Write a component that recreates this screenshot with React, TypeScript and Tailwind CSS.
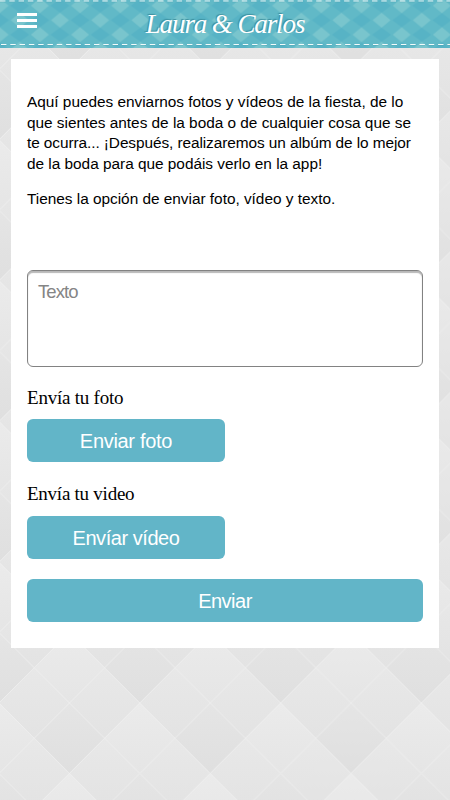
export default function App() {
  return (
    <div className="relative flex h-[800px] w-[450px] flex-col overflow-hidden bg-[#e5e5e5] font-['Liberation_Sans',Arial,sans-serif] text-black">
      <svg className="absolute inset-0" width="450" height="800" aria-hidden="true">
        <defs>
          <linearGradient id="shade" x1="0" y1="0" x2="0" y2="1">
            <stop offset="0" stopColor="#e5e5e5" />
            <stop offset="1" stopColor="#dfdfdf" />
          </linearGradient>
          <linearGradient id="light" x1="0" y1="0" x2="0" y2="1">
            <stop offset="0" stopColor="#ebebeb" />
            <stop offset="1" stopColor="#e5e5e5" />
          </linearGradient>
          <linearGradient id="mid" x1="0" y1="0" x2="0" y2="1">
            <stop offset="0" stopColor="#e8e8e8" />
            <stop offset="1" stopColor="#e3e3e3" />
          </linearGradient>
          <pattern id="paper" width="140.8" height="140.8" patternUnits="userSpaceOnUse" patternTransform="translate(-1 703)">
            <rect width="140.8" height="140.8" fill="#e6e6e6" />
            {[[35.2, 0], [105.6, 0], [35.2, 70.4], [105.6, 70.4], [35.2, 140.8], [105.6, 140.8]].map(([x, y]) => (
              <path key={`${x}-${y}`} d={`M${x} ${y - 35.2}l35.2 35.2l-35.2 35.2l-35.2 -35.2z`} fill="url(#mid)" />
            ))}
            {[[0, 35.2], [140.8, 35.2], [70.4, 105.6], [70.4, -35.2]].map(([x, y]) => (
              <path key={`${x}-${y}`} d={`M${x} ${y - 35.2}l35.2 35.2l-35.2 35.2l-35.2 -35.2z`} fill="url(#light)" />
            ))}
            {[[70.4, 35.2], [0, 105.6], [140.8, 105.6]].map(([x, y]) => (
              <path key={`${x}-${y}`} d={`M${x} ${y - 35.2}l35.2 35.2l-35.2 35.2l-35.2 -35.2z`} fill="url(#shade)" />
            ))}
            <path d="M0 0L140.8 140.8M140.8 0L0 140.8M70.4 0L140.8 70.4L70.4 140.8L0 70.4Z" fill="none" stroke="#f0f0f0" strokeWidth=".7" />
          </pattern>
        </defs>
        <rect width="450" height="800" fill="url(#paper)" />
      </svg>

      <header className="relative flex h-12 shrink-0 items-center justify-center">
        <svg className="absolute inset-0" width="450" height="48" aria-hidden="true">
          <defs>
            <pattern id="gingham" width="40.2" height="29" patternUnits="userSpaceOnUse" patternTransform="translate(-.3 5.7)">
              <rect width="40.2" height="29" fill="#61b9c7" />
              <path d="M20.1 7l9 7.5l-9 7.5l-9 -7.5zM0 -7.5l9 7.5L0 7.5l-9 -7.5zM40.2 -7.5l9 7.5l-9 7.5l-9 -7.5zM0 21.5l9 7.5L0 36.5l-9 -7.5zM40.2 21.5l9 7.5l-9 7.5l-9 -7.5z" fill="#79c5cd" />
              <path d="M20.1 -7l9.5 7l-9.5 7l-9.5 -7zM20.1 22l9.5 7l-9.5 7l-9.5 -7zM0 7.5l9.5 7L0 21.5l-9.5 -7zM40.2 7.5l9.5 7l-9.5 7l-9.5 -7z" fill="#57b3c5" />
            </pattern>
          </defs>
          <rect width="450" height="48" fill="url(#gingham)" />
          <path d="M0 1H450M1 44.5H450" stroke="#f3fcfc" strokeWidth="1.1" strokeDasharray="5.4 3.9" />
          <path d="M0 2H450M1 45.5H450" stroke="#378f9f" strokeOpacity=".35" strokeWidth=".6" strokeDasharray="5.4 3.9" />
        </svg>
        <button aria-label="Menú" className="absolute left-[17px] top-[13px] flex w-5 flex-col gap-[3px]">
          <span className="h-[3px] bg-white" />
          <span className="h-[3px] bg-white" />
          <span className="h-[3px] bg-white" />
        </button>
        <h1 className="relative whitespace-nowrap font-['Liberation_Serif',serif] text-[27px] italic leading-[48px] tracking-[-1.1px] text-white [text-shadow:-1px_-1px_1px_#3b8f9e]">Laura &amp; Carlos</h1>
      </header>

      <main className="relative mx-[11px] mt-[11px] flex h-[589px] flex-col bg-white px-4 pt-[33px]">
        <div className="whitespace-nowrap text-[15.4px] leading-[20.6px] tracking-[-0.02px]">
          <p>
            Aquí puedes enviarnos fotos y vídeos de la fiesta, de lo<br />
            que sientes antes de la boda o de cualquier cosa que se<br />
            <span className="tracking-[-0.08px]">te ocurra... ¡Después, realizaremos un albúm de lo mejor</span><br />
            de la boda para que podáis verlo en la app!
          </p>
          <p className="mt-[15px]">Tienes la opción de enviar foto, vídeo y texto.</p>
        </div>
        <textarea placeholder="Texto" className="mt-[60px] h-[97px] w-[396px] shrink-0 resize-none rounded-md border border-[#828282] px-[10px] py-[9px] text-[18.5px] leading-6 tracking-[-0.9px] shadow-[inset_0_2px_1px_#b8b8b8] placeholder:text-[#858585]" />
        <label className="mt-5 font-['Liberation_Serif',serif] text-[19px] leading-[22px] tracking-[-0.22px]">Envía tu foto</label>
        <button className="mt-[10px] h-[43.5px] w-[198px] shrink-0 rounded-md bg-[#62b5c8] text-xl tracking-[-0.3px] text-white">Enviar foto</button>
        <label className="mt-[20.5px] font-['Liberation_Serif',serif] text-[19px] leading-[22px] tracking-[-0.25px]">Envía tu video</label>
        <button className="mt-[11px] h-[43.5px] w-[198px] shrink-0 rounded-md bg-[#62b5c8] text-xl tracking-[-0.45px] text-white">Envíar vídeo</button>
        <button className="mt-[19.5px] h-[43.5px] w-[396px] shrink-0 rounded-md bg-[#62b5c8] text-xl tracking-[-0.5px] text-white">Enviar</button>
      </main>
    </div>
  );
}
